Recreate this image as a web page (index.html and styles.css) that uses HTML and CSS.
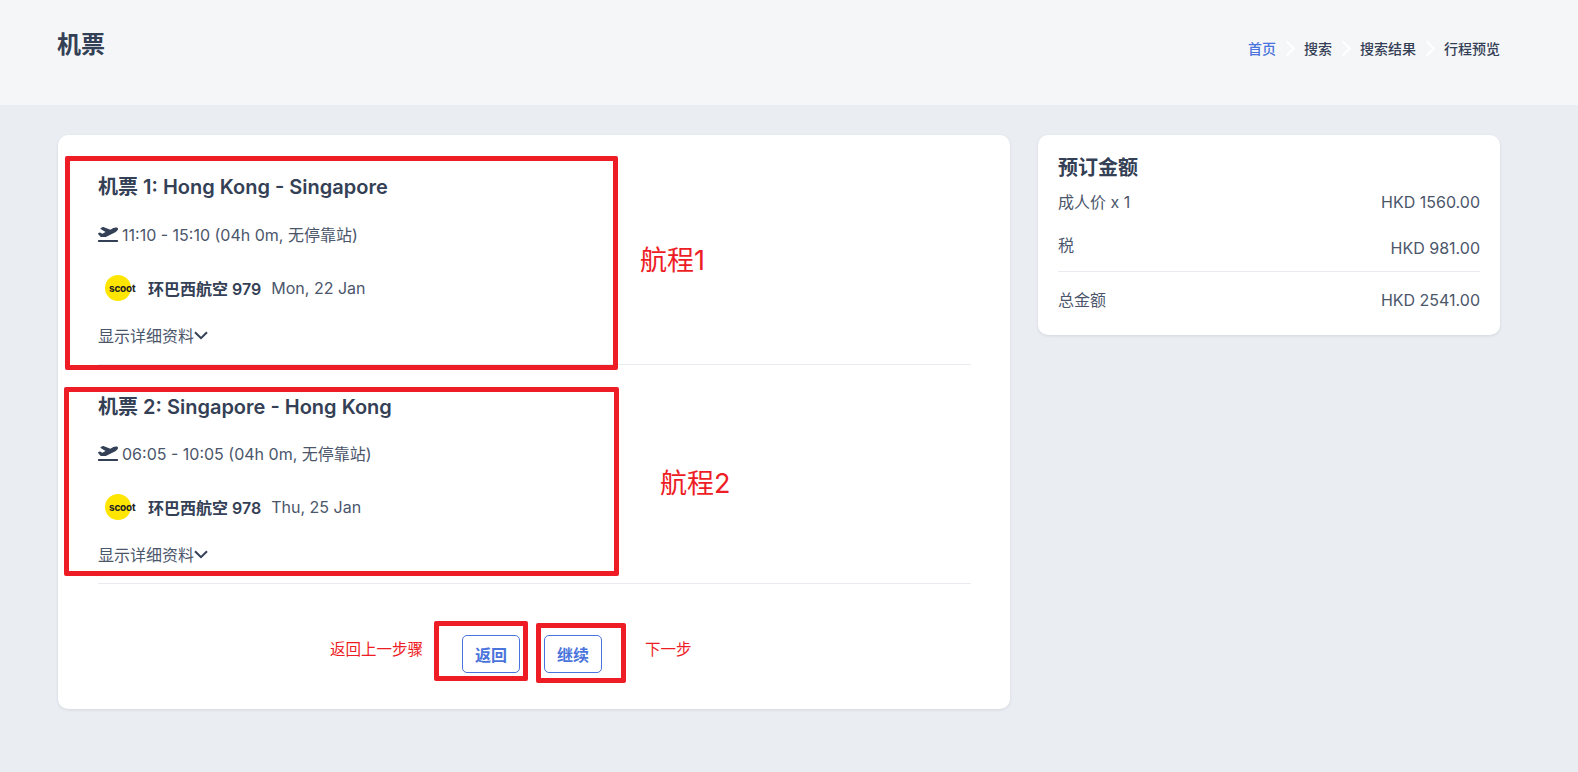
FILE: index.html
```html
<!DOCTYPE html>
<html lang="zh">
<head>
    <title>机票</title>
    <meta charset="UTF-8">
    <link rel="stylesheet" href="styles.css">
</head>
<body>
    <header class="topbar">
        <h1 class="page-title">机票</h1>
        <nav class="crumbs">
            <a class="crumb active">首页</a>
            <span class="crumb-sep"></span>
            <a class="crumb">搜索</a>
            <span class="crumb-sep"></span>
            <a class="crumb">搜索结果</a>
            <span class="crumb-sep"></span>
            <a class="crumb">行程预览</a>
        </nav>
    </header>

    <main class="content">
        <section class="card trips">
            <div class="leg">
                <h2 class="leg-title">机票 1: Hong Kong - Singapore</h2>
                <div class="leg-time">
                    <svg class="plane" viewBox="0 0 640 512"><path d="M624 448H16c-8.84 0-16 7.16-16 16v32c0 8.84 7.16 16 16 16h608c8.84 0 16-7.16 16-16v-32c0-8.84-7.16-16-16-16zM80.55 341.27c6.28 6.84 15.1 10.72 24.33 10.71l130.54-.18a65.62 65.62 0 0 0 29.64-7.12l290.96-147.65c26.74-13.57 50.71-32.94 67.02-58.31 18.31-28.48 20.3-49.09 13.07-63.65-7.21-14.57-24.74-25.27-58.25-27.45-29.85-1.94-59.54 5.92-86.28 19.48l-98.51 49.99-218.7-82.06a17.799 17.799 0 0 0-18-1.11L90.62 67.29c-10.67 5.41-13.25 19.65-5.17 28.53l156.22 98.1-103.21 52.38-72.35-36.47a17.804 17.804 0 0 0-16.07.02L9.91 230.22c-10.44 5.3-13.19 19.12-5.57 28.08l76.21 82.97z"/></svg>
                    <span>11:10 - 15:10 (04h 0m, 无停靠站)</span>
                </div>
                <div class="leg-flight">
                    <span class="logo"><span class="logo-text">scoot</span></span>
                    <strong class="flight-name">环巴西航空 979</strong>
                    <span>Mon, 22 Jan</span>
                </div>
                <a class="leg-more">显示详细资料<svg class="chev" viewBox="0 0 14 9"><path d="M1 1.2l6 6 6-6"/></svg></a>
            </div>
            <div class="leg leg-second">
                <h2 class="leg-title">机票 2: Singapore - Hong Kong</h2>
                <div class="leg-time">
                    <svg class="plane" viewBox="0 0 640 512"><path d="M624 448H16c-8.84 0-16 7.16-16 16v32c0 8.84 7.16 16 16 16h608c8.84 0 16-7.16 16-16v-32c0-8.84-7.16-16-16-16zM80.55 341.27c6.28 6.84 15.1 10.72 24.33 10.71l130.54-.18a65.62 65.62 0 0 0 29.64-7.12l290.96-147.65c26.74-13.57 50.71-32.94 67.02-58.31 18.31-28.48 20.3-49.09 13.07-63.65-7.21-14.57-24.74-25.27-58.25-27.45-29.85-1.94-59.54 5.92-86.28 19.48l-98.51 49.99-218.7-82.06a17.799 17.799 0 0 0-18-1.11L90.62 67.29c-10.67 5.41-13.25 19.65-5.17 28.53l156.22 98.1-103.21 52.38-72.35-36.47a17.804 17.804 0 0 0-16.07.02L9.91 230.22c-10.44 5.3-13.19 19.12-5.57 28.08l76.21 82.97z"/></svg>
                    <span>06:05 - 10:05 (04h 0m, 无停靠站)</span>
                </div>
                <div class="leg-flight">
                    <span class="logo"><span class="logo-text">scoot</span></span>
                    <strong class="flight-name">环巴西航空 978</strong>
                    <span>Thu, 25 Jan</span>
                </div>
                <a class="leg-more">显示详细资料<svg class="chev" viewBox="0 0 14 9"><path d="M1 1.2l6 6 6-6"/></svg></a>
            </div>
            <div class="actions">
                <button class="btn">返回</button>
                <button class="btn">继续</button>
            </div>
        </section>

        <aside class="card summary">
            <h3 class="summary-title">预订金额</h3>
            <div class="price-row first"><span>成人价 x 1</span><span>HKD 1560.00</span></div>
            <div class="price-row tax"><span>税</span><span class="tax-amount">HKD 981.00</span></div>
            <div class="price-row total"><span>总金额</span><span>HKD 2541.00</span></div>
        </aside>
    </main>

    <!-- red review marks drawn over the page -->
    <div class="mark mark-leg1"></div>
    <div class="mark mark-leg2"></div>
    <div class="mark mark-back"></div>
    <div class="mark mark-next"></div>
    <div class="note note-big note-leg1">航程1</div>
    <div class="note note-big note-leg2">航程2</div>
    <div class="note note-back">返回上一步骤</div>
    <div class="note note-next">下一步</div>
</body>
</html>
```

FILE: styles.css
```css
:root {
    --ink: #344055;
    --ink-soft: #4b566b;
    --blue: #4a74dc;
    --line: #e8ebef;
    --red: #ee1c25;
}

* {
    box-sizing: border-box;
}

body {
    margin: 0;
    background-color: #eaedf2;
    color: var(--ink-soft);
    font-family: Inter, "Noto Sans CJK SC", sans-serif;
    font-size: 16px;
    position: relative;
    min-height: 772px;
}

.topbar {
    height: 105px;
    background-color: #f5f6f8;
    padding: 0 78px 0 57px;
    display: flex;
    justify-content: space-between;
}
.page-title {
    margin: 28px 0 0;
    font-size: 24px;
    line-height: 34px;
    font-weight: 700;
    color: var(--ink);
}
.crumbs {
    display: flex;
    align-items: center;
    height: 20px;
    margin-top: 38px;
    font-size: 14px;
    font-weight: 500;
    color: var(--ink);
}
.crumb.active {
    color: var(--blue);
}
.crumb-sep {
    width: 11px;
    height: 11px;
    margin: 0 11px 0 6px;
    border-top: 2px solid #fff;
    border-right: 2px solid #fff;
    transform: rotate(45deg);
}

.content {
    display: grid;
    grid-template-columns: 952px 462px;
    column-gap: 28px;
    align-items: start;
    padding: 30px 0 0 58px;
}
.card {
    background-color: #fff;
    border-radius: 10px;
    box-shadow: 0 1px 3px rgba(52, 64, 85, 0.12);
}

.trips {
    height: 574px;
    padding: 38px 39px 0 40px;
}
.leg {
    height: 192px;
    border-bottom: 1px solid var(--line);
}
.leg-second {
    height: 219px;
    padding-top: 28px;
}
.leg-title {
    margin: 0;
    font-size: 20px;
    line-height: 28px;
    font-weight: 600;
    color: var(--ink);
}
.leg-time {
    display: flex;
    align-items: center;
    gap: 4px;
    height: 24px;
    margin-top: 21px;
}
.leg-second .leg-time {
    margin-top: 20px;
}
.plane {
    width: 20px;
    height: 16px;
    fill: var(--ink);
}
.leg-flight {
    display: flex;
    align-items: center;
    height: 28px;
    margin-top: 28px;
    padding-left: 7px;
}
.logo {
    width: 26px;
    height: 26px;
    border-radius: 50%;
    background-color: #ffe600;
    display: flex;
    align-items: center;
    margin-right: 17px;
}
.logo-text {
    font-size: 10px;
    font-weight: 700;
    letter-spacing: -0.2px;
    color: #222;
    padding-left: 4px;
    white-space: nowrap;
}
.flight-name {
    font-weight: 600;
    color: var(--ink);
    margin-right: 10px;
}
.leg-more {
    display: flex;
    align-items: center;
    height: 24px;
    margin-top: 21px;
}
.chev {
    width: 14px;
    height: 9px;
    fill: none;
    stroke: var(--ink);
    stroke-width: 2;
}

.actions {
    display: flex;
    justify-content: center;
    gap: 24px;
    margin-top: 51px;
    padding-right: 5px;
}
.btn {
    width: 58px;
    height: 38px;
    padding: 0;
    background-color: #fff;
    border: 1px solid var(--blue);
    border-radius: 5px;
    color: var(--blue);
    font-family: inherit;
    font-size: 16px;
    font-weight: 600;
}

.summary {
    height: 200px;
    padding: 20px 20px 0;
}
.summary-title {
    margin: 0;
    font-size: 20px;
    line-height: 26px;
    font-weight: 600;
    color: var(--ink);
}
.price-row {
    display: flex;
    justify-content: space-between;
    line-height: 22px;
}
.price-row.first {
    margin-top: 10px;
}
.price-row.tax {
    margin-top: 21px;
    padding-bottom: 12px;
    border-bottom: 1px solid var(--line);
}
.tax-amount {
    margin-top: 3px;
}
.price-row.total {
    margin-top: 17px;
}

.mark {
    position: absolute;
    border: 5px solid var(--red);
    border-radius: 2px;
}
.mark-leg1 {
    left: 65px;
    top: 156px;
    width: 553px;
    height: 214px;
}
.mark-leg2 {
    left: 64px;
    top: 387px;
    width: 555px;
    height: 189px;
}
.mark-back {
    left: 434px;
    top: 621px;
    width: 94px;
    height: 60px;
}
.mark-next {
    left: 536px;
    top: 623px;
    width: 90px;
    height: 60px;
}
.note {
    position: absolute;
    color: var(--red);
    font-size: 15.5px;
    line-height: 22px;
}
.note-big {
    font-size: 27px;
    line-height: 36px;
}
.note-leg1 {
    left: 640px;
    top: 243px;
}
.note-leg2 {
    left: 660px;
    top: 466px;
}
.note-back {
    left: 330px;
    top: 639px;
}
.note-next {
    left: 645px;
    top: 639px;
}
```
